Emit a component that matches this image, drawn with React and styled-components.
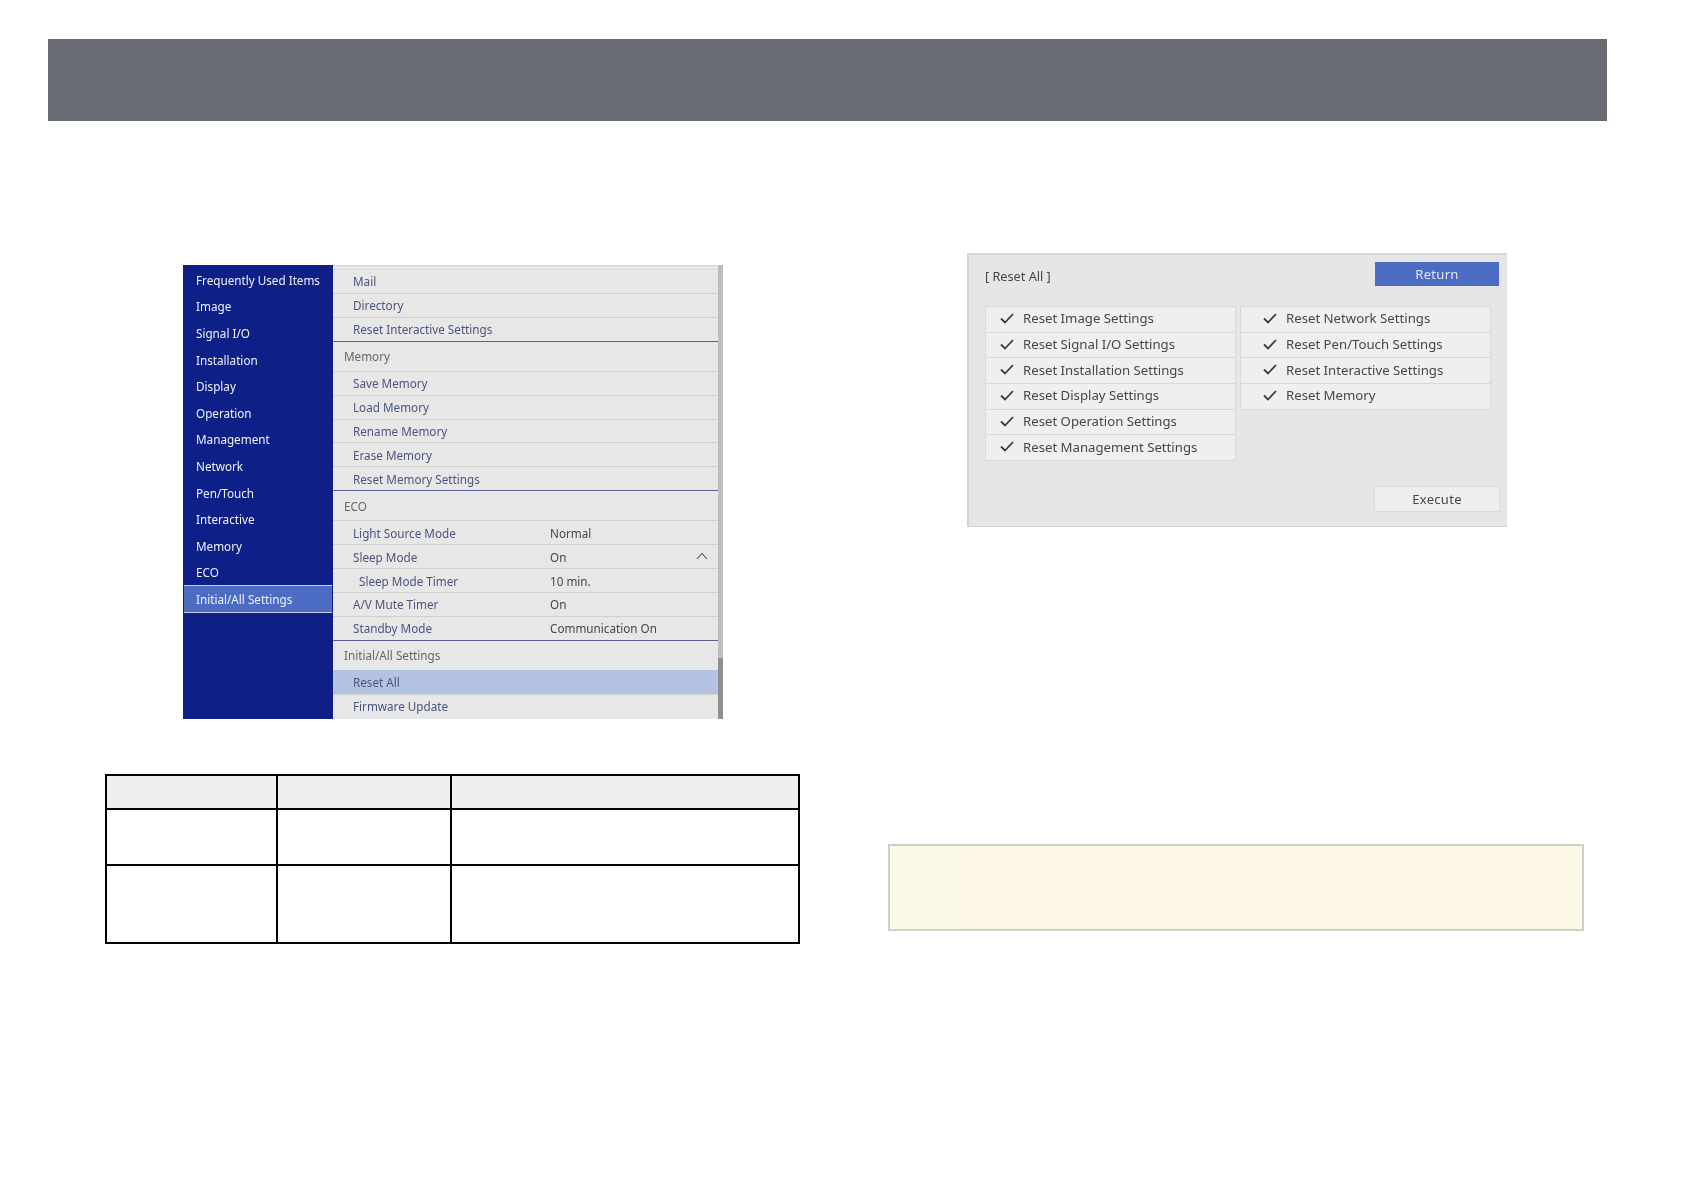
import styled, { createGlobalStyle } from "styled-components";

const GlobalStyle = createGlobalStyle`
  html, body {
    margin: 0;
    padding: 0;
    background: #fff;
    font-family: "Noto Sans", "Open Sans", sans-serif;
  }
`;

const Page = styled.div`
  width: 1684px;
  height: 1190px;
  padding: 39px 0 0 48px;
  box-sizing: border-box;
  overflow: hidden;
`;

const Banner = styled.div`
  width: 1559px;
  height: 82px;
  background: #696b72;
`;

const Columns = styled.div`
  display: flex;
  gap: 88px;
  padding-left: 57px;
`;

const LeftColumn = styled.div`
  width: 695px;
  padding-top: 144px;
`;

const RightColumn = styled.div`
  width: 696px;
  padding-top: 132px;
`;

/* projector menu screenshot */
const Menu = styled.div`
  display: flex;
  width: 540px;
  height: 454px;
  margin-left: 78px;
  filter: blur(0.3px);
`;

const Sidebar = styled.div`
  width: 150px;
  padding-top: 1.5px;
  box-sizing: border-box;
  background: #0e2088;
`;

const SideItem = styled.div`
  height: 26.6px;
  margin: 0 ${(p) => (p.$active ? "1px" : "0")};
  padding-left: ${(p) => (p.$active ? "12px" : "13px")};
  display: flex;
  align-items: center;
  box-sizing: border-box;
  font-size: 11.7px;
  white-space: nowrap;
  color: #eef0fa;
  background: ${(p) => (p.$active ? "#4c6cc4" : "transparent")};
  box-shadow: ${(p) =>
    p.$active ? "0 -1px 0 #c5cfea, 0 1px 0 #c5cfea" : "none"};
`;

const MenuBody = styled.div`
  flex: 1;
  padding-top: 4px;
  background: #e7e7e7;
  box-shadow: inset 0 1px 0 #d4d4d4;
`;

const MenuRow = styled.div`
  height: 23.85px;
  display: flex;
  align-items: center;
  box-sizing: border-box;
  padding-left: ${(p) => (p.$sub ? "26px" : "20px")};
  font-size: 11.7px;
  white-space: nowrap;
  color: #4c5480;
  background: ${(p) => (p.$selected ? "#b4c3e2" : "transparent")};
  border-top: 1px solid ${(p) => (p.$selected ? "#b4c3e2" : "#cfcfcf")};
  &:first-child {
    border-top-color: #dcdcdc;
  }
`;

const RowLabel = styled.span`
  width: ${(p) => (p.$sub ? "191px" : "197px")};
`;

const RowValue = styled.span`
  color: #45464c;
`;

const Chevron = styled.svg`
  position: absolute;
  right: 10px;
  top: 7px;
  width: 12px;
  height: 8px;
`;

const ChevronRow = styled(MenuRow)`
  position: relative;
`;

const SectionRow = styled.div`
  height: 30.35px;
  display: flex;
  align-items: center;
  box-sizing: border-box;
  padding-left: 11px;
  font-size: 11.7px;
  color: #65666c;
  border-top: 1px solid #5d5f8f;
`;

const ScrollTrack = styled.div`
  width: 5px;
  display: flex;
  flex-direction: column;
  justify-content: flex-end;
  background: #bdbdbd;
`;

const ScrollThumb = styled.div`
  height: 61px;
  background: #8f8f8f;
`;

/* table */
const Table = styled.table`
  width: 693px;
  margin-top: 55px;
  border-collapse: collapse;
  table-layout: fixed;
`;

const HeadCell = styled.th`
  height: 32px;
  padding: 0;
  background: #efefef;
  border: 2px solid #000;
`;

const Cell = styled.td`
  height: ${(p) => p.$h}px;
  padding: 0;
  border: 2px solid #000;
`;

/* reset all dialog */
const Dialog = styled.div`
  width: 540px;
  height: 274px;
  margin-left: 79px;
  padding: 7px 8px 14px 16px;
  box-sizing: border-box;
  display: flex;
  flex-direction: column;
  background: #e6e6e6;
  border-top: 2px solid #d6d6d6;
  border-left: 2px solid #d3d3d3;
  border-bottom: 1px solid #d3d3d3;
  filter: blur(0.3px);
`;

const DialogTop = styled.div`
  display: flex;
  align-items: center;
  justify-content: space-between;
  height: 24px;
`;

const DialogTitle = styled.span`
  padding-top: 3px;
  font-size: 12.7px;
  color: #45464c;
`;

const PrimaryButton = styled.div`
  width: 124px;
  height: 24px;
  display: flex;
  align-items: center;
  justify-content: center;
  font-size: 13px;
  letter-spacing: 0.3px;
  color: #dfe6f8;
  background: #4c6cc4;
`;

const Lists = styled.div`
  display: flex;
  align-items: flex-start;
  gap: 4px;
  margin-top: 20px;
  flex: 1;
`;

const CheckList = styled.div`
  width: 251px;
  background: #efefef;
  border: 1px solid #d9d9d9;
  border-top: none;
  box-sizing: border-box;
`;

const CheckRow = styled.div`
  height: 25.7px;
  display: flex;
  align-items: center;
  box-sizing: border-box;
  padding-left: ${(p) => p.$inset}px;
  padding-bottom: 2px;
  gap: 9px;
  font-size: 13.2px;
  white-space: nowrap;
  color: #45464c;
  border-top: 1px solid #d9d9d9;
`;

const CheckMark = styled.svg`
  width: 14px;
  height: 11px;
  flex: none;
`;

const DialogBottom = styled.div`
  display: flex;
  justify-content: flex-end;
`;

const SecondaryButton = styled.div`
  width: 126px;
  height: 26px;
  margin-right: -1px;
  display: flex;
  align-items: center;
  justify-content: center;
  font-size: 13px;
  letter-spacing: 0.3px;
  color: #45464c;
  background: #efefef;
  border: 1px solid #dcdcdc;
  box-sizing: border-box;
`;

const Note = styled.div`
  width: 696px;
  height: 87px;
  margin-top: 317px;
  box-sizing: border-box;
  background: linear-gradient(90deg, #fbf9e7, #fdf8e6 80px);
  border: 2px solid #cfcfcc;
`;

const sideItems = [
  "Frequently Used Items",
  "Image",
  "Signal I/O",
  "Installation",
  "Display",
  "Operation",
  "Management",
  "Network",
  "Pen/Touch",
  "Interactive",
  "Memory",
  "ECO",
];

const leftChecks = [
  "Reset Image Settings",
  "Reset Signal I/O Settings",
  "Reset Installation Settings",
  "Reset Display Settings",
  "Reset Operation Settings",
  "Reset Management Settings",
];

const rightChecks = [
  "Reset Network Settings",
  "Reset Pen/Touch Settings",
  "Reset Interactive Settings",
  "Reset Memory",
];

const Row = ({ label, value, sub, selected }) => (
  <MenuRow $sub={sub} $selected={selected}>
    <RowLabel $sub={sub}>{label}</RowLabel>
    {value && <RowValue>{value}</RowValue>}
  </MenuRow>
);

const Checks = ({ items, inset }) => (
  <CheckList>
    {items.map((item) => (
      <CheckRow key={item} $inset={inset}>
        <CheckMark viewBox="0 0 14 11">
          <path d="M1 5.5 L5 9.5 L13 1" fill="none" stroke="#3a3b40" strokeWidth="1.8" />
        </CheckMark>
        {item}
      </CheckRow>
    ))}
  </CheckList>
);

const App = () => (
  <Page>
    <GlobalStyle />
    <Banner />
    <Columns>
      <LeftColumn>
        <Menu>
          <Sidebar>
            {sideItems.map((item) => (
              <SideItem key={item}>{item}</SideItem>
            ))}
            <SideItem $active>Initial/All Settings</SideItem>
          </Sidebar>
          <MenuBody>
            <Row label="Mail" />
            <Row label="Directory" />
            <Row label="Reset Interactive Settings" />
            <SectionRow>Memory</SectionRow>
            <Row label="Save Memory" />
            <Row label="Load Memory" />
            <Row label="Rename Memory" />
            <Row label="Erase Memory" />
            <Row label="Reset Memory Settings" />
            <SectionRow>ECO</SectionRow>
            <Row label="Light Source Mode" value="Normal" />
            <ChevronRow>
              <RowLabel>Sleep Mode</RowLabel>
              <RowValue>On</RowValue>
              <Chevron viewBox="0 0 12 8">
                <path d="M1 7 L6 1.5 L11 7" fill="none" stroke="#4a5060" strokeWidth="1.1" />
              </Chevron>
            </ChevronRow>
            <Row label="Sleep Mode Timer" value="10 min." sub />
            <Row label="A/V Mute Timer" value="On" />
            <Row label="Standby Mode" value="Communication On" />
            <SectionRow>Initial/All Settings</SectionRow>
            <Row label="Reset All" selected />
            <Row label="Firmware Update" />
          </MenuBody>
          <ScrollTrack>
            <ScrollThumb />
          </ScrollTrack>
        </Menu>
        <Table>
          <colgroup>
            <col width="171" />
            <col width="174" />
            <col width="348" />
          </colgroup>
          <thead>
            <tr>
              <HeadCell />
              <HeadCell />
              <HeadCell />
            </tr>
          </thead>
          <tbody>
            <tr>
              <Cell $h={54} />
              <Cell $h={54} />
              <Cell $h={54} />
            </tr>
            <tr>
              <Cell $h={76} />
              <Cell $h={76} />
              <Cell $h={76} />
            </tr>
          </tbody>
        </Table>
      </LeftColumn>
      <RightColumn>
        <Dialog>
          <DialogTop>
            <DialogTitle>[ Reset All ]</DialogTitle>
            <PrimaryButton>Return</PrimaryButton>
          </DialogTop>
          <Lists>
            <Checks items={leftChecks} inset={14} />
            <Checks items={rightChecks} inset={22} />
          </Lists>
          <DialogBottom>
            <SecondaryButton>Execute</SecondaryButton>
          </DialogBottom>
        </Dialog>
        <Note />
      </RightColumn>
    </Columns>
  </Page>
);

export default App;
